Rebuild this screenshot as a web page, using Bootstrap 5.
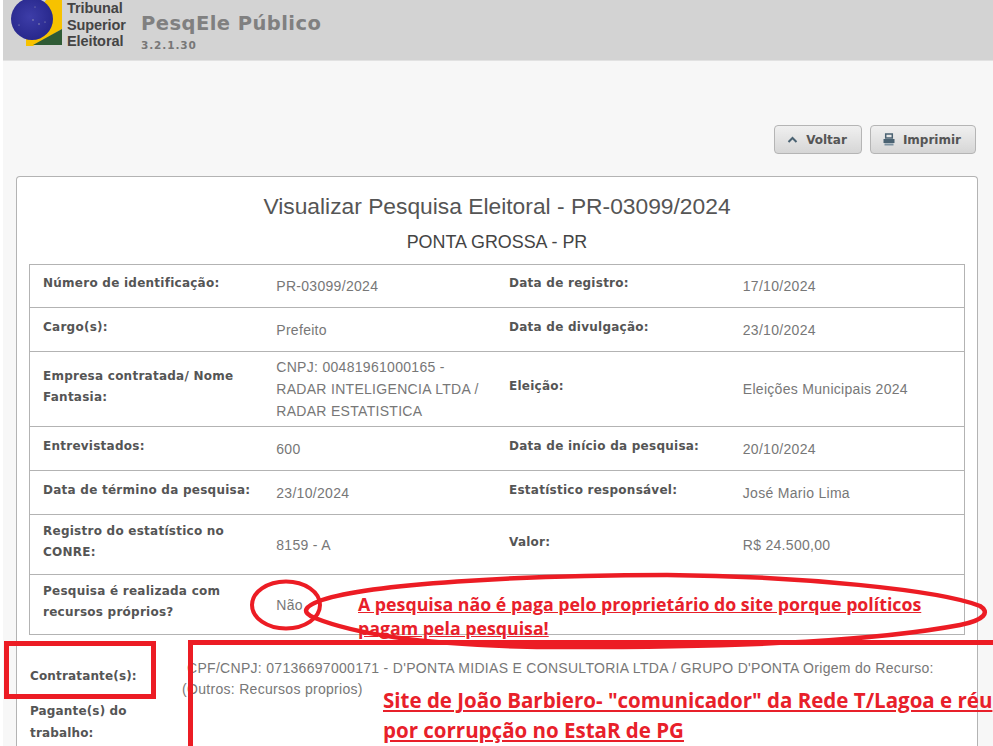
<!DOCTYPE html>
<html lang="pt-BR"><head><meta charset="utf-8"><title>PesqEle Público</title>
<link href="https://cdn.jsdelivr.net/npm/bootstrap@5.3.0/dist/css/bootstrap.min.css" rel="stylesheet">
<style>
html,body{height:746px;overflow:hidden}
body{background:#f7f7f7;border-left:3px solid #fff;font-family:"Liberation Sans",Arial,sans-serif;color:#777;font-size:14px;position:relative}
.top-band{height:61px;background:#d3d3d3;border-bottom:1px solid #e2e2e2;padding-left:6px;overflow:hidden}
.brand-logo{width:58px;height:48px;flex:none;margin-top:-2px}
.brand-words{font-weight:700;font-size:14.5px;line-height:16.5px;color:#444;width:69px;letter-spacing:-.1px}
.brand-app{margin-left:5px;color:#808080;padding-top:12px}
.brand-app h1{font-family:"DejaVu Sans",sans-serif;font-weight:700;font-size:19.5px;line-height:24px;margin:0;letter-spacing:.45px;color:#808080}
.brand-app span{display:block;font-family:"DejaVu Sans",sans-serif;font-weight:700;font-size:10.5px;line-height:14px;letter-spacing:.9px;color:#777;margin-top:2px}
.actions-bar{height:115px;padding:64px 17px 0 0;gap:8px}
.act-btn{height:29px;padding:0 14px 0 12px;border:1px solid #b5b5b5;border-radius:4px;background:linear-gradient(#f0f0f0,#d6d6d6);color:#555;font-family:"DejaVu Sans",sans-serif;font-weight:700;font-size:12px;display:flex;align-items:center;gap:8px;box-shadow:none}
.sheet{margin:0 15px 0 13px;background:#fff;border:1px solid #b3b3b3;border-bottom:0;border-radius:4px 4px 0 0;padding:13px 12px 0;height:570px;overflow:hidden}
.sheet-title{font-size:22.8px;font-weight:400;text-align:center;color:#555;line-height:34px;margin:-1px 0 0}
.sheet-sub{font-size:17.9px;text-align:center;color:#444;line-height:22px;margin:8px 0 11px;padding:0}
.info-grid{width:100%;table-layout:fixed;border:1px solid #b3b3b3;border-collapse:collapse}
.info-grid tr{border-bottom:1px solid #b3b3b3}
.info-grid td{height:44px;vertical-align:middle;padding:4px 13px;line-height:22px;color:#777;letter-spacing:.3px}
.info-grid tr:first-child td{height:43px}
.info-grid td.lbl{font-family:"DejaVu Sans",sans-serif;font-weight:700;font-size:12px;line-height:21px;color:#555;padding:6px 2px 11px 13px;letter-spacing:.25px}
.info-grid td:nth-child(3),.info-grid td:nth-child(4){padding-left:12px}
.info-grid td.lbl:nth-child(3){padding-left:12px}
.party-row{display:flex;margin-left:1px}
.party-first{margin-top:23px}
.party-lbl{width:152px;flex:none;font-family:"DejaVu Sans",sans-serif;font-weight:700;font-size:12px;line-height:22px;color:#555;letter-spacing:.15px}
.party-first .party-lbl{padding-top:7px}
.party-val{line-height:21px;color:#777;letter-spacing:.3px;text-indent:5px}
.party-val span{display:block;text-indent:0}
.ink-layer{position:absolute;left:-3px;top:0;width:993px;height:746px;pointer-events:none}
.ink-note{position:absolute;font-family:"Open Sans",sans-serif;font-weight:700;color:#e8202a;text-decoration:underline;white-space:nowrap}
.ink-a{left:358px;font-size:17.75px;line-height:24px}
.ink-b{left:383px;font-size:20.5px;line-height:26px}
</style></head><body>
<header class="top-band d-flex align-items-start">
<svg class="brand-logo" viewBox="0 0 58 48" aria-hidden="true"><defs><radialGradient id="g" cx=".45" cy=".45" r=".6"><stop offset="0" stop-color="#3d3da8"/><stop offset="1" stop-color="#26268a"/></radialGradient></defs>
<polygon points="37,2 53,2 53,31 24,48 17,48 17,30" fill="#f7c200"/><polygon points="53,31 53,47 24,47" fill="#2f5b35"/><circle cx="23" cy="21" r="21" fill="url(#g)"/><g fill="#aab"><circle cx="24" cy="22" r=".7"/><circle cx="30" cy="26" r=".7"/><circle cx="10" cy="27" r=".6"/><circle cx="36" cy="24" r=".6"/><circle cx="26" cy="9" r=".5"/></g></svg>
<div class="brand-words">Tribunal<br>Superior<br>Eleitoral</div>
<div class="brand-app"><h1>PesqEle Público</h1><span>3.2.1.30</span></div>
</header>
<div class="actions-bar d-flex justify-content-end">
<button class="btn act-btn" type="button"><svg width="11" height="7" viewBox="0 0 11 7"><path d="M1.5 6 5.5 2l4 4" fill="none" stroke="#4a6272" stroke-width="2"/></svg>Voltar</button>
<button class="btn act-btn" type="button"><svg width="12" height="13" viewBox="0 0 12 13"><path d="M2.7 1h6.6v4H2.7z" fill="none" stroke="#4a6272" stroke-width="1.5"/><path d="M.5 6h11v4H.5z" fill="#4a6272"/><path d="M1.5 10.5h9v2h-9z" fill="#7d93a2"/></svg>Imprimir</button>
</div>
<main class="sheet">
<h2 class="sheet-title">Visualizar Pesquisa Eleitoral - PR-03099/2024</h2>
<p class="sheet-sub">PONTA GROSSA - PR</p>
<table class="info-grid"><tbody>
<tr><td class="lbl">Número de identificação:</td><td>PR-03099/2024</td><td class="lbl">Data de registro:</td><td>17/10/2024</td></tr>
<tr><td class="lbl">Cargo(s):</td><td>Prefeito</td><td class="lbl">Data de divulgação:</td><td>23/10/2024</td></tr>
<tr><td class="lbl">Empresa contratada/ Nome Fantasia:</td><td>CNPJ: 00481961000165 - RADAR INTELIGENCIA LTDA / RADAR ESTATISTICA</td><td class="lbl">Eleição:</td><td>Eleições Municipais 2024</td></tr>
<tr><td class="lbl">Entrevistados:</td><td>600</td><td class="lbl">Data de início da pesquisa:</td><td>20/10/2024</td></tr>
<tr><td class="lbl">Data de término da pesquisa:</td><td>23/10/2024</td><td class="lbl">Estatístico responsável:</td><td>José Mario Lima</td></tr>
<tr><td class="lbl">Registro do estatístico no CONRE:</td><td>8159 - A</td><td class="lbl">Valor:</td><td>R$ 24.500,00</td></tr>
<tr><td class="lbl">Pesquisa é realizada com recursos próprios?</td><td>Não</td><td></td><td></td></tr>
</tbody></table>
<section class="party-row party-first"><div class="party-lbl">Contratante(s):</div><div class="party-val">CPF/CNPJ: 07136697000171 - D'PONTA MIDIAS E CONSULTORIA LTDA / GRUPO D'PONTA Origem do Recurso: <span>(Outros: Recursos proprios)</span></div></section>
<section class="party-row"><div class="party-lbl">Pagante(s) do<br>trabalho:</div></section>
</main>
<div class="ink-layer">
<div class="ink-note ink-a" style="top:592px">A pesquisa não é paga pelo proprietário do site porque políticos</div>
<div class="ink-note ink-a" style="top:616px">pagam pela pesquisa!</div>
<div class="ink-note ink-b" style="top:687px">Site de João Barbiero- "comunicador" da Rede T/Lagoa e réu</div>
<div class="ink-note ink-b" style="top:717px">por corrupção no EstaR de PG</div>
<svg width="993" height="746" viewBox="0 0 993 746" style="position:absolute;left:0;top:0" fill="none" stroke="#ec1c24">
<ellipse cx="286" cy="605" rx="34" ry="23.5" stroke-width="4"/>
<path d="M315 618C300 612 305 606 322 600C370 584 520 575 667 575C800 576 940 590 980 606C990 612 985 620 960 625C880 640 760 647 567 647C470 647 370 640 315 618" stroke-width="4.5"/>
<rect x="6.5" y="643.5" width="147" height="53" stroke-width="5"/>
<path d="M190.5 770V642.5H993" stroke-width="5"/>
</svg>
</div>
<script src="https://cdn.jsdelivr.net/npm/bootstrap@5.3.0/dist/js/bootstrap.bundle.min.js"></script>
</body></html>
